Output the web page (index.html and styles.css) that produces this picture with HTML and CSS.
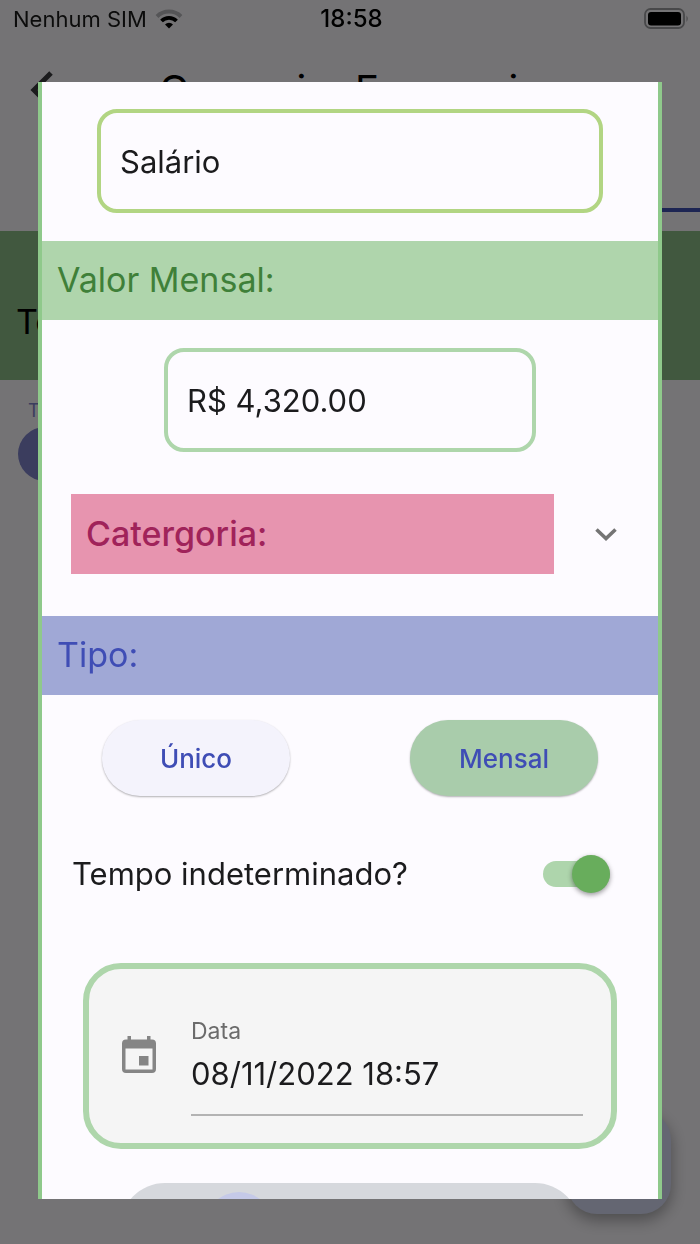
FILE: index.html
```html
<!DOCTYPE html>
<html lang="pt-BR">
<head>
<meta charset="utf-8">
<meta name="viewport" content="width=device-width, initial-scale=1">
<title>Gerenciar Economia</title>
<link rel="stylesheet" href="styles.css">
</head>
<body>
<div class="app">
  <header class="app-bar">
    <button class="back" type="button" aria-label="Voltar">
      <svg width="24" height="38" viewBox="0 0 24 38"><path d="M21 2 4 19l17 17" fill="none" stroke="#3c3c40" stroke-width="5"/></svg>
    </button>
    <h1 class="app-title">Gerenciar Economia</h1>
  </header>
  <div class="tabs"><span class="tab"></span><span class="tab tab-active"></span></div>
  <section class="total">Total</section>
  <section class="filter">
    <span class="filter-label">Tipo</span>
    <span class="filter-chip"></span>
  </section>
  <button class="fab" type="button" aria-label="Adicionar"></button>
</div>

<div class="scrim">
  <div class="status-bar">
    <div class="carrier">
      <span>Nenhum SIM</span>
      <svg width="28" height="20" viewBox="0 0 28 20">
        <path d="M2 7.500a17 17 0 0 1 24 0" fill="none" stroke="#555557" stroke-width="4"/>
        <path d="M6.500 12a10.600 10.600 0 0 1 15 0" fill="none" stroke="#000" stroke-width="3.800"/>
        <path d="M10 15.500a5.700 5.700 0 0 1 8 0L14 19.500z" fill="#000"/>
      </svg>
    </div>
    <time class="clock">18:58</time>
    <svg class="battery" width="46" height="22" viewBox="0 0 46 22">
      <rect x="1" y="1" width="39" height="19" rx="5.500" fill="none" stroke="#48484a" stroke-width="1.800"/>
      <rect x="4" y="4" width="33" height="13.500" rx="3" fill="#000"/>
      <path d="M42.500 7.500q2.500 3.200 0 6.500z" fill="#48484a"/>
    </svg>
  </div>

  <form class="dialog" role="dialog" aria-label="Editar economia">
    <input class="field field-name" type="text" value="Salário" aria-label="Nome">
    <label class="band band-green" for="value">Valor Mensal:</label>
    <input class="field field-value" id="value" type="text" value="R$ 4,320.00">
    <button class="category" type="button" aria-expanded="false">
      <span class="category-name">Catergoria:</span>
      <svg width="24" height="16" viewBox="0 0 24 16"><path d="M2.500 3.500 12 12.500l9.500-9" fill="none" stroke="#747474" stroke-width="3.600"/></svg>
    </button>
    <h2 class="band band-indigo">Tipo:</h2>
    <div class="kinds">
      <button class="kind" type="button">Único</button>
      <button class="kind kind-selected" type="button" aria-pressed="true">Mensal</button>
    </div>
    <div class="endless">
      <label for="endless">Tempo indeterminado?</label>
      <input class="switch" id="endless" type="checkbox" role="switch" checked>
    </div>
    <div class="date-card">
      <svg width="36" height="40" viewBox="0 0 36 40">
        <path fill="#858585" fill-rule="evenodd" d="M6.500 1H10v3.500h16V1h3.500v3.500H31q4 0 4 4V34q0 4-4 4H5q-4 0-4-4V8.500q0-4 4-4h1.500zM4.500 13.500v21h27v-21z"/>
        <rect x="18" y="21" width="9.500" height="9.500" fill="#858585"/>
      </svg>
      <div class="date-field">
        <label for="date">Data</label>
        <input id="date" type="text" value="08/11/2022 18:57">
      </div>
    </div>
    <button class="submit" type="button" aria-label="Salvar"><span class="submit-glow"></span></button>
  </form>
</div>
</body>
</html>
```
FILE: styles.css
```css
* {
  box-sizing: border-box;
}

body {
  margin: 0;
  font-family: Inter, "Liberation Sans", sans-serif;
  color: #1b1b1d;
}

button,
input {
  margin: 0;
  padding: 0;
  border: 0;
  background: none;
  font: inherit;
  color: inherit;
}

svg {
  display: block;
  flex: none;
}

/* Page behind the dialog */
.app {
  display: flex;
  flex-direction: column;
  min-height: 100vh;
  padding-top: 38px;
  background: #fdfbff;
}

.app-bar {
  display: grid;
  grid-template-columns: 60px 1fr 60px;
  align-items: center;
  height: 104px;
}

.back {
  justify-self: end;
  padding-right: 6px;
}

.app-title {
  margin: 0;
  font-size: 40px;
  font-weight: 400;
  line-height: 48px;
  text-align: center;
  white-space: nowrap;
  color: #000;
}

.tabs {
  display: flex;
  height: 70px;
  margin-bottom: 19px;
}

.tab {
  flex: 1;
}

.tab-active {
  border-bottom: 4px solid #3f51b5;
}

.total {
  padding: 71px 16px 38px;
  background: #8fc189;
  font-size: 34px;
  line-height: 40px;
  color: #000;
}

.filter {
  display: flex;
  flex-direction: column;
  gap: 6px;
  padding: 21px 18px;
}

.filter-label {
  padding-left: 10px;
  font-size: 18px;
  line-height: 20px;
  color: #8085cc;
}

.filter-chip {
  width: 50%;
  height: 54px;
  border-radius: 27px;
  background: #8085cc;
}

.fab {
  position: fixed;
  right: 29px;
  bottom: 30px;
  width: 104px;
  height: 104px;
  border-radius: 30px;
  background: #dadef8;
  box-shadow: 0 6px 16px rgba(0, 0, 0, 0.35);
}

/* Scrim and status bar */
.scrim {
  position: fixed;
  inset: 0;
  display: flex;
  flex-direction: column;
  padding: 0 38px 45px;
  background: rgba(0, 0, 0, 0.54);
}

.status-bar {
  display: grid;
  grid-template-columns: 1fr auto 1fr;
  align-items: center;
  flex: none;
  height: 38px;
  margin: 0 -28px 44px;
  padding-left: 3px;
  font-size: 22px;
  line-height: 28px;
  color: #0c0c0c;
}

.carrier {
  display: flex;
  align-items: center;
  gap: 8px;
}

.clock {
  font-size: 24px;
  font-weight: 500;
  color: #000;
}

.battery {
  justify-self: end;
}

/* Dialog */
.dialog {
  display: flex;
  flex: 1;
  flex-direction: column;
  min-height: 0;
  overflow: hidden;
  padding-top: 27px;
  border: solid #8fc98b;
  border-width: 0 4px;
  background: #fdfbff;
}

.dialog > * {
  flex: none;
}

.field {
  height: 104px;
  padding: 0 19px;
  border: 4px solid #aed6ab;
  border-radius: 20px;
  font-size: 31px;
}

.field-name {
  margin: 0 55px 28px;
  border-color: #b2d583;
}

.field-value {
  margin: 28px 122px 42px;
}

.band {
  margin: 0;
  padding: 19px 15px 20px;
  font-size: 34px;
  font-weight: 400;
  line-height: 40px;
}

.band-green {
  background: #afd5ac;
  color: #3f8039;
}

.band-indigo {
  background: #a0a8d6;
  color: #3f4db5;
}

.category {
  display: flex;
  align-items: center;
  gap: 40px;
  margin: 0 40px 42px 29px;
  text-align: left;
}

.category-name {
  flex: 1;
  padding: 20px 15px;
  background: #e794af;
  font-size: 34px;
  font-weight: 500;
  line-height: 40px;
  color: #a0235a;
}

.kinds {
  display: flex;
  justify-content: space-between;
  padding: 25px 60px 58px;
}

.kind {
  width: 188px;
  height: 76px;
  border-radius: 38px;
  background: #f4f3fc;
  box-shadow: 0 1px 2px rgba(0, 0, 0, 0.3);
  font-size: 26px;
  font-weight: 500;
  color: #3f4db5;
}

.kind-selected {
  background: #a9ccab;
}

.endless {
  display: flex;
  align-items: center;
  justify-content: space-between;
  margin-bottom: 69px;
  padding: 0 48px 0 30px;
  font-size: 31px;
  line-height: 40px;
}

.switch {
  position: relative;
  width: 67px;
  height: 26px;
  border-radius: 13px;
  appearance: none;
  background: #aed5ac;
}

.switch::before {
  content: "";
  position: absolute;
  top: -6px;
  right: 0;
  width: 38px;
  height: 38px;
  border-radius: 50%;
  background: #68ad5c;
  box-shadow: 0 2px 5px rgba(0, 0, 0, 0.4);
}

.date-card {
  display: flex;
  align-items: flex-start;
  gap: 34px;
  margin: 0 41px 34px;
  padding: 48px 28px 27px 32px;
  border: 6px solid #aed6ab;
  border-radius: 38px;
  background: #f5f5f5;
}

.date-card svg {
  margin-top: 18px;
}

.date-field {
  display: flex;
  flex: 1;
  flex-direction: column;
  min-width: 0;
  border-bottom: 2px solid #b3b3b3;
}

.date-field label {
  font-size: 23px;
  line-height: 28px;
  color: #6b6b6b;
}

.date-field input {
  width: 100%;
  height: 69px;
  padding-bottom: 12px;
  font-size: 31px;
}

.submit {
  display: flex;
  height: 90px;
  margin: 0 78px;
  padding: 9px 84px;
  border-radius: 45px;
  background: #d6d8dd;
}

.submit-glow {
  width: 70px;
  height: 70px;
  border-radius: 50%;
  background: #c5c9e8;
}
```
